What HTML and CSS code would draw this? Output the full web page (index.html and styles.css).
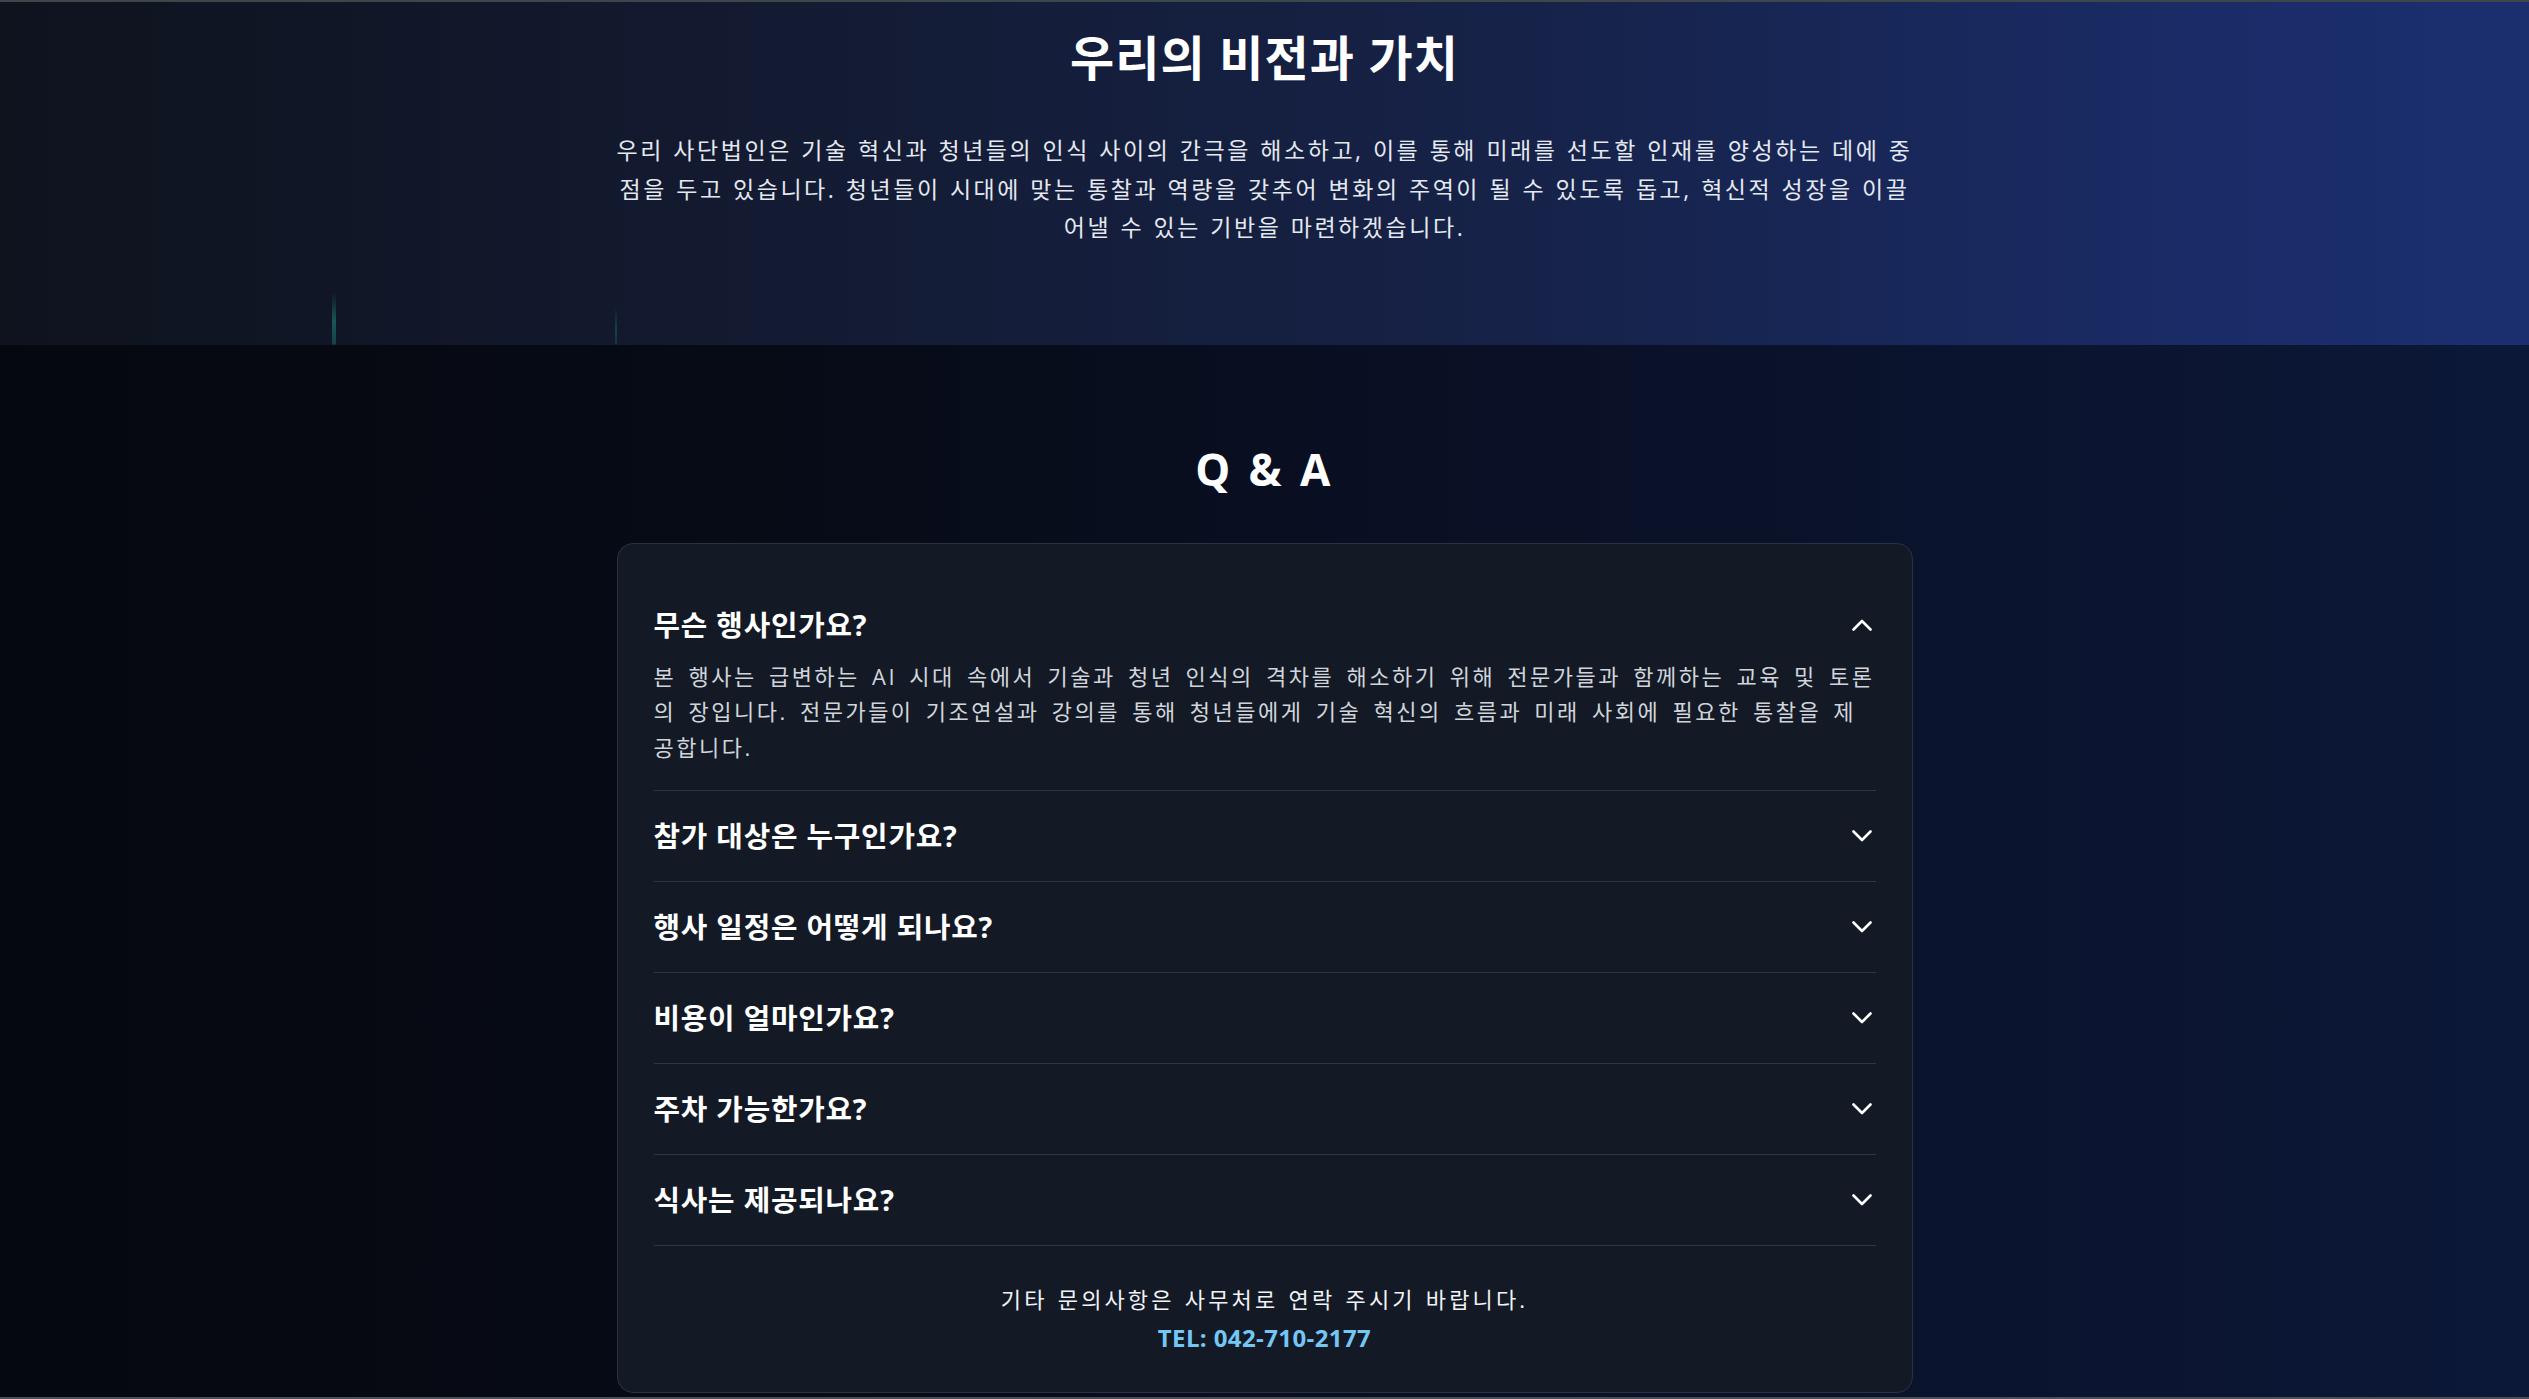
FILE: index.html
```html
<!DOCTYPE html>
<html lang="ko">
<head>
<meta charset="utf-8">
<title>우리의 비전과 가치 · Q &amp; A</title>
<link rel="stylesheet" href="styles.css">
</head>
<body>
<div class="frame-top"></div>
<section class="hero">
  <span class="streak streak-a"></span>
  <span class="streak streak-b"></span>
  <div class="hero-inner">
    <h2 class="hero-title">우리의 비전과 가치</h2>
    <p class="hero-text">우리 사단법인은 기술 혁신과 청년들의 인식 사이의 간극을 해소하고, 이를 통해 미래를 선도할 인재를 양성하는 데에 중<br>점을 두고 있습니다. 청년들이 시대에 맞는 통찰과 역량을 갖추어 변화의 주역이 될 수 있도록 돕고, 혁신적 성장을 이끌<br>어낼 수 있는 기반을 마련하겠습니다.</p>
  </div>
</section>
<section class="qa">
  <div class="container">
    <h2 class="qa-title">Q &amp; A</h2>
    <div class="qa-card">
      <div class="qa-item open">
        <button class="qa-q" type="button"><span>무슨 행사인가요?</span><svg class="chev" viewBox="0 0 20 12" width="20" height="12"><polyline points="1.5,10.5 10,2 18.5,10.5"/></svg></button>
        <div class="qa-a">본 행사는 급변하는 AI 시대 속에서 기술과 청년 인식의 격차를 해소하기 위해 전문가들과 함께하는 교육 및 토론<br>의 장입니다. 전문가들이 기조연설과 강의를 통해 청년들에게 기술 혁신의 흐름과 미래 사회에 필요한 통찰을 제<br>공합니다.</div>
      </div>
      <div class="qa-item">
        <button class="qa-q" type="button"><span>참가 대상은 누구인가요?</span><svg class="chev" viewBox="0 0 20 12" width="20" height="12"><polyline points="1.5,1.5 10,10 18.5,1.5"/></svg></button>
      </div>
      <div class="qa-item">
        <button class="qa-q" type="button"><span>행사 일정은 어떻게 되나요?</span><svg class="chev" viewBox="0 0 20 12" width="20" height="12"><polyline points="1.5,1.5 10,10 18.5,1.5"/></svg></button>
      </div>
      <div class="qa-item">
        <button class="qa-q" type="button"><span>비용이 얼마인가요?</span><svg class="chev" viewBox="0 0 20 12" width="20" height="12"><polyline points="1.5,1.5 10,10 18.5,1.5"/></svg></button>
      </div>
      <div class="qa-item">
        <button class="qa-q" type="button"><span>주차 가능한가요?</span><svg class="chev" viewBox="0 0 20 12" width="20" height="12"><polyline points="1.5,1.5 10,10 18.5,1.5"/></svg></button>
      </div>
      <div class="qa-item">
        <button class="qa-q" type="button"><span>식사는 제공되나요?</span><svg class="chev" viewBox="0 0 20 12" width="20" height="12"><polyline points="1.5,1.5 10,10 18.5,1.5"/></svg></button>
      </div>
      <div class="qa-footer">
        <p class="qa-note">기타 문의사항은 사무처로 연락 주시기 바랍니다.</p>
        <p class="qa-tel">TEL: 042-710-2177</p>
      </div>
    </div>
  </div>
</section>
<div class="frame-bottom"></div>
</body>
</html>
```

FILE: styles.css
```css
* { box-sizing: border-box; }

html, body {
  margin: 0;
  padding: 0;
}

body {
  background: #070b15;
  color: #ffffff;
  font-family: "Open Sans", "Noto Sans CJK KR", "Noto Sans", sans-serif;
}

.frame-top {
  position: fixed;
  top: 0;
  left: 0;
  right: 0;
  height: 2px;
  background: #3d4749;
  z-index: 10;
}

.frame-bottom {
  position: fixed;
  bottom: 0;
  left: 0;
  right: 0;
  height: 2px;
  background: #4b5057;
  z-index: 10;
}

/* ---------- hero ---------- */
.hero {
  position: relative;
  overflow: hidden;
  background: linear-gradient(90deg, #0f131e 0%, #131a30 28%, #162248 60%, #1a2c68 88%, #1b2f6f 100%);
  padding: 30px 0 98px;
  text-align: center;
}

.streak {
  position: absolute;
  bottom: 0;
  border-radius: 3px;
}

.streak-a {
  left: 332px;
  width: 4px;
  height: 52px;
  background: linear-gradient(180deg, rgba(30, 140, 130, 0) 0%, rgba(30, 140, 130, 0.55) 55%, rgba(30, 140, 130, 0.35) 100%);
}

.streak-b {
  left: 615px;
  width: 2px;
  height: 38px;
  background: linear-gradient(180deg, rgba(30, 140, 130, 0) 0%, rgba(30, 140, 130, 0.35) 60%, rgba(30, 140, 130, 0.2) 100%);
}

.hero-inner {
  width: 1340px;
  margin: 0 auto;
}

.hero-title {
  margin: 0;
  font-size: 48px;
  font-weight: 700;
  line-height: 56px;
  letter-spacing: 1.1px;
  color: #ffffff;
}

.hero-text {
  margin: 45px 0 0;
  font-size: 23px;
  line-height: 38.5px;
  letter-spacing: 2.55px;
  word-spacing: 0.8px;
  color: #e4e8ef;
}

/* ---------- Q&A ---------- */
.qa {
  background: linear-gradient(90deg, #05080f 0%, #070b16 30%, #0a1127 62%, #0c1838 100%);
  padding: 96px 0 80px;
}

.container {
  width: 1296px;
  margin: 0 auto;
}

.qa-title {
  margin: 0 0 46px;
  text-align: center;
  font-size: 44px;
  font-weight: 700;
  line-height: 56px;
  letter-spacing: 3.5px;
  color: #ffffff;
}

.qa-card {
  background: #131a26;
  border: 1px solid #2a3240;
  border-radius: 16px;
  padding: 36px;
}

.qa-item {
  border-bottom: 1px solid #2e3646;
}

.qa-q {
  display: flex;
  width: 100%;
  align-items: center;
  justify-content: space-between;
  padding: 26px 0;
  margin: 0;
  border: 0;
  background: none;
  color: #ffffff;
  font: inherit;
  font-size: 28.8px;
  font-weight: 700;
  line-height: 38px;
  letter-spacing: 0.8px;
  text-align: left;
  cursor: pointer;
}

.qa-item.open .qa-q {
  padding-bottom: 15px;
}

.chev {
  flex: none;
  margin-right: 4px;
  fill: none;
  stroke: #ffffff;
  stroke-width: 2.6;
  stroke-linecap: round;
  stroke-linejoin: round;
}

.qa-a {
  padding-bottom: 24.5px;
  font-size: 22px;
  line-height: 35.5px;
  letter-spacing: 2.5px;
  word-spacing: 4px;
  color: #d1d5db;
}

.qa-footer {
  margin-top: 35.5px;
  text-align: center;
}

.qa-note {
  margin: 0;
  font-size: 22px;
  line-height: 36px;
  letter-spacing: 3.1px;
  word-spacing: 1.5px;
  color: #f1f3f6;
}

.qa-tel {
  margin: 2.5px 0 0;
  font-size: 24px;
  font-weight: 700;
  line-height: 36px;
  letter-spacing: 0.4px;
  color: #74c7f4;
}
```
